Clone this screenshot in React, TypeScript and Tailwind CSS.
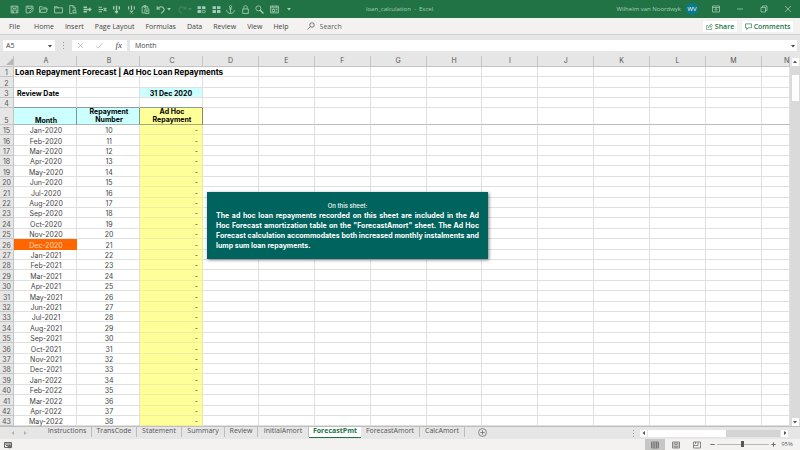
import React from "react";

const EXTRA_COLUMNS = ["D", "E", "F", "G", "H", "I", "J", "K", "L", "M", "N"];
const MONTHS = ["Jan", "Feb", "Mar", "Apr", "May", "Jun", "Jul", "Aug", "Sep", "Oct", "Nov", "Dec"];
const MENU = ["Home", "Insert", "Page Layout", "Formulas", "Data", "Review", "View", "Help"];
const TABS = [
  { name: "Instructions", width: "w-[49px]" },
  { name: "TransCode", width: "w-[45px]" },
  { name: "Statement", width: "w-[45px]" },
  { name: "Summary", width: "w-[43px]" },
  { name: "Review", width: "w-[33px]" },
  { name: "InitialAmort", width: "w-[51px]" },
  { name: "ForecastPmt", width: "w-[52px]", active: true },
  { name: "ForecastAmort", width: "w-[59px]" },
  { name: "CalcAmort", width: "w-[45px]" },
];

const ROWS = Array.from({ length: 29 }, (_, i) => ({
  row: 15 + i,
  month: `${MONTHS[i % 12]}-${2020 + Math.floor(i / 12)}`,
  number: 10 + i,
}));

function Icon({ children, className = "size-[9px]" }: { children: React.ReactNode; className?: string }) {
  return (
    <svg viewBox="0 0 16 16" className={className} fill="none" stroke="currentColor" strokeWidth="1.5" aria-hidden="true">
      {children}
    </svg>
  );
}

function Tool({ label, children }: { label: string; children: React.ReactNode }) {
  return (
    <button aria-label={label} className="flex size-[9px] items-center justify-center">
      <Icon>{children}</Icon>
    </button>
  );
}

function Caret({ className = "" }: { className?: string }) {
  return (
    <svg viewBox="0 0 8 8" className={`size-1 ${className}`} fill="currentColor" aria-hidden="true">
      <path d="M0 2h8L4 7z" />
    </svg>
  );
}

function TitleBar() {
  return (
    <header className="flex h-[18px] shrink-0 items-center bg-[#217346] pl-[10px] text-[6px] text-[#a6cdb6]">
      <div className="flex w-[155px] items-center justify-between">
        <Tool label="Save"><path d="M2 2h12v12H2zM5 2v4h6V2M4 14V9h8v5M6 11v3" /></Tool>
        <Tool label="Save as"><path d="M7 14H2V2h12v5M5 2v4h6V2M8 14l1-3 5-5 2 2-5 5z" /></Tool>
        <Tool label="Open"><path d="M1 13V3h5l2 2h5v2M1 13l3-6h11l-2 6z" /></Tool>
        <Tool label="Close folder"><path d="M1 14V3h5l1 2h8v9zM1 5h7" /></Tool>
        <Tool label="Print preview"><path d="M7 15H3V1h6l4 4v3M9 1v4h4M9 15V9h5v5H9zM12 13l3 2" /></Tool>
        <Tool label="Insert rows"><path d="M1 4h6M1 12h6M1 8h14M12 5v6" strokeWidth="2.4" /></Tool>
        <Tool label="Delete rows"><path d="M1 4h6M1 12h6M1 8h8M10 5l5 6M15 5l-5 6" strokeWidth="2" /></Tool>
        <Tool label="Insert columns"><path d="M3 2v6M13 2v6M8 1v14M5 12h6" strokeWidth="2.4" /></Tool>
        <Tool label="Delete columns"><path d="M3 2v6M13 2v6M8 1v8M5 10l6 5M11 10l-6 5" strokeWidth="2" /></Tool>
        <Tool label="Paste"><path d="M6 14H2V3h10v3M5 3V1h4v3H5M7 7h7v8H7zM9 10h3M9 12h3" /></Tool>
        <Tool label="Undo"><path d="M2 2v5h5M2 7c3-4 8-5 11-2s1 6-2 8l-2 2" strokeWidth="1.8" /></Tool>
      </div>
      <Caret className="ml-[2px]" />
      <div className="ml-[7px] flex items-center text-[#438863]">
        <Tool label="Redo"><path d="M14 2v5H9M14 7c-3-4-8-5-11-2s-1 6 2 8l2 2" strokeWidth="1.8" /></Tool>
        <Caret className="ml-[1px]" />
      </div>
      <div className="ml-[5px] flex w-[96px] items-center justify-between">
        <Tool label="Freeze panes">
          <path d="M1 2h6v5H1zM9 2h6v5H9zM1 9h6v5H1z" fill="currentColor" stroke="none" />
          <path d="M9 9.500h5.500v4H9z" strokeWidth="1.2" />
        </Tool>
        <Tool label="Unfreeze panes"><path d="M1 2h6v5H1zM9 2h6v5H9zM1 9h6v5H1zM9 9h6v5H9z" fill="currentColor" stroke="none" /></Tool>
        <Tool label="Anchor"><circle cx="8" cy="3" r="2" /><path d="M8 5v10M5 7h6M1 9c1 4 3 6 7 6s6-2 7-6" /></Tool>
        <Tool label="Protect"><path d="M3 7h10v8H3zM5 7V4c0-4 6-4 6 0v3" /></Tool>
        <Tool label="Find"><circle cx="6" cy="6" r="4.500" /><path d="M9 9l6 6" strokeWidth="2.400" /></Tool>
        <Tool label="Form"><path d="M1 2h14v12H1zM1 5h14M4 8h4v4H4zM10 8h3M10 11h3M5 1v3M11 1v3" /></Tool>
        <button aria-label="Customize toolbar" className="flex w-[9px] justify-center"><Caret /></button>
      </div>
      <h1 className="flex-1 pl-[73px] whitespace-pre">loan_calculation  -  Excel</h1>
      <span>Wilhelm van Noordwyk</span>
      <span className="ml-[5px] flex size-3 items-center justify-center rounded-full bg-[#0b7a8c] text-[6px] text-white">WV</span>
      <div className="flex items-center gap-[16px] pr-[8px] pl-[14px]">
        <button aria-label="Ribbon display options"><Icon className="size-2"><path d="M1 2h14v12H1zM1 5h14M8 13V7M5 10l3-3 3 3" /></Icon></button>
        <button aria-label="Minimize"><Icon className="size-2"><path d="M2 8h12" /></Icon></button>
        <button aria-label="Restore"><Icon className="size-2"><path d="M2 5h9v9H2zM5 5V2h9v9h-3" /></Icon></button>
        <button aria-label="Close"><Icon className="size-2"><path d="M2 2l12 12M14 2L2 14" /></Icon></button>
      </div>
    </header>
  );
}

function MenuBar() {
  return (
    <nav className="flex h-4 shrink-0 items-center bg-[#f3f2f1] pr-[7px] pl-[9px] text-[7px] text-[#444444]">
      <button className="mr-[14px]">File</button>
      <div className="flex gap-[11px]">
        {MENU.map((item) => <button key={item}>{item}</button>)}
      </div>
      <label className="ml-[18px] flex flex-1 items-center gap-[5px]">
        <Icon className="size-2 text-[#555555]"><circle cx="10" cy="6" r="4.500" /><path d="M7 9l-6 6" /></Icon>
        <input aria-label="Search" placeholder="Search" className="w-12 bg-transparent outline-none placeholder:text-[#5c5c5c]" />
      </label>
      <div className="flex gap-[5px] font-semibold text-[#217346]">
        <button className="flex h-[11px] w-[34px] items-center justify-center gap-[2px] rounded-[1px] bg-white">
          <Icon className="size-[7px]"><path d="M5 6H1v9h12v-4M5 11c0-4 3-6 6-6V2l4 4-4 4V8c-3 0-5 1-6 3z" strokeWidth="1.2" /></Icon>Share
        </button>
        <button className="flex h-[11px] w-[51px] items-center justify-center gap-[2px] rounded-[1px] bg-white">
          <Icon className="size-[7px]"><path d="M1 2h14v9H7l-3 4v-4H1z" /></Icon>Comments
        </button>
      </div>
    </nav>
  );
}

function FormulaBar() {
  return (
    <div className="flex h-[22px] shrink-0 items-center border-t border-[#d2d2d2] bg-[#e6e6e6] pr-[3px] pl-[3px] text-[7px] text-[#444444]">
      <label className="flex h-[11px] w-[52px] items-center bg-white pr-[3px] pl-[3px]">
        <input aria-label="Name box" defaultValue="A5" className="min-w-0 flex-1 bg-transparent outline-none" />
        <Caret />
      </label>
      <div className="flex w-[17px] flex-col items-center gap-[2px]">
        <i className="size-px bg-[#999999]" /><i className="size-px bg-[#999999]" /><i className="size-px bg-[#999999]" />
      </div>
      <div className="flex h-[11px] w-[55px] items-center justify-between bg-white px-[5px]">
        <button aria-label="Cancel" className="text-[#a8a8a8]"><Icon className="size-[7px]"><path d="M2 2l12 12M14 2L2 14" /></Icon></button>
        <button aria-label="Enter" className="text-[#a8a8a8]"><Icon className="size-[7px]"><path d="M1 9l4 5L15 2" /></Icon></button>
        <button aria-label="Insert function" className="font-['Liberation_Serif',serif] text-[9px] leading-[9px] italic">fx</button>
      </div>
      <label className="ml-[3px] flex h-[11px] flex-1 items-center bg-white pr-[2px] pl-[5px]">
        <input aria-label="Formula" defaultValue="Month" className="min-w-0 flex-1 bg-transparent outline-none" />
        <Caret />
      </label>
    </div>
  );
}

const HEAD = "border-b border-r border-[#c4c4c4] bg-[#e6e6e6] p-0 text-center leading-[10px] font-normal text-[#555555]";
const CELL = "border-b border-r border-[#e0e0e0] p-0";

function RowHead({ n, className = "pt-[2px]" }: { n: number; className?: string }) {
  return (
    <th scope="row" className={`border-r border-b border-[#c4c4c4] bg-[#e6e6e6] px-0 pb-0 text-center font-normal text-[#555555] ${className}`}>
      {n}
    </th>
  );
}

function EmptyCells({ from = 0, className = CELL }: { from?: number; className?: string }) {
  return <>{EXTRA_COLUMNS.slice(from).map((c) => <td key={c} className={className} />)}</>;
}

function Sheet() {
  return (
    <div className="relative min-w-0 flex-1 overflow-hidden bg-white font-['Inter',sans-serif] text-[7px] leading-[7px] text-[#444444]">
      <table className="w-full table-fixed border-separate border-spacing-0">
        <colgroup>
          <col className="w-[14px]" /><col className="w-[63px]" /><col className="w-[63px]" /><col className="w-[63px]" />
          {EXTRA_COLUMNS.map((c) => <col key={c} className={c === "N" ? "w-[28px]" : ""} />)}
        </colgroup>
        <thead>
          <tr className="h-[11px]">
            <th className={HEAD}>
              <svg viewBox="0 0 8 8" className="ml-auto size-[7px] fill-[#b8b8b8]" aria-hidden="true"><path d="M8 0v8H0z" /></svg>
            </th>
            {["A", "B", "C"].map((c) => <th key={c} scope="col" className={`${HEAD} pl-[2px]`}>{c}</th>)}
            {EXTRA_COLUMNS.map((c) => (
              <th key={c} scope="col" className={c === "N" ? `${HEAD} pl-[22px]` : HEAD}>{c}</th>
            ))}
          </tr>
        </thead>
        <tbody>
          <tr className="h-[10px]">
            <RowHead n={1} />
            <td colSpan={4} className="border-r border-b border-[#e0e0e0] pt-[2px] pr-0 pb-0 pl-px text-[8px] font-bold whitespace-nowrap text-black">
              Loan Repayment Forecast | Ad Hoc Loan Repayments
            </td>
            <EmptyCells from={1} />
          </tr>
          <tr className="h-[11px]">
            <RowHead n={2} />
            <td className={CELL} /><td className={CELL} /><td className={CELL} />
            <EmptyCells />
          </tr>
          <tr className="h-[10px] font-bold text-black">
            <RowHead n={3} />
            <td className="border-r border-b border-[#e0e0e0] pt-[2px] pr-0 pb-0 pl-[3px]">Review Date</td>
            <td className={CELL} />
            <td className="border-r border-b border-[#e0e0e0] bg-[#ccffff] px-0 pt-[2px] pb-0 text-center">31 Dec 2020</td>
            <EmptyCells />
          </tr>
          <tr className="h-[10px]">
            <RowHead n={4} />
            <td className="border-r border-b border-r-[#e0e0e0] border-b-[#8c9c9c] p-0" />
            <td className="border-r border-b border-r-[#e0e0e0] border-b-[#8c9c9c] p-0" />
            <td className="border-r border-b border-r-[#e0e0e0] border-b-[#8c9c9c] p-0" />
            <EmptyCells />
          </tr>
          <tr className="h-[17px] text-center align-bottom leading-[8px] font-bold text-black">
            <RowHead n={5} className="align-bottom leading-[7px]" />
            <td className="border-r border-b border-r-[#7d9a9a] border-b-[#a8b8b8] bg-[#ccffff] p-0 pl-[2px] leading-[7px]">Month</td>
            <td className="border-r border-b border-r-[#7d9a9a] border-b-[#a8b8b8] bg-[#ccffff] p-0 pl-[2px]">Repayment<br />Number</td>
            <td className="border-r border-b border-r-[#8a8a60] border-b-[#a8a878] bg-[#ffff99] p-0 pl-[2px]">Ad Hoc<br />Repayment</td>
            <EmptyCells className="border-r border-b border-r-[#e0e0e0] border-b-[#bcbcbc] p-0" />
          </tr>
        </tbody>
        <tbody className="text-center">
          {ROWS.map(({ row, month, number }) => (
            <tr key={row} className="h-[10px] nth-[5n+2]:h-[11px] nth-[5n+5]:h-[11px]">
              <RowHead n={row} />
              <td
                className={
                  row === 26
                    ? "border-r border-b border-[#ff6600] bg-[#ff6600] pt-[2px] pr-0 pb-0 pl-[2px] text-[#ffd9bf]"
                    : "border-r border-b border-[#e0e0e0] pt-[2px] pr-0 pb-0 pl-[2px]"
                }
              >
                {month}
              </td>
              <td className="border-r border-b border-[#e0e0e0] pt-[2px] pr-0 pb-0 pl-[2px]">{number}</td>
              <td className="border-r border-b border-r-[#e6e6b0] border-b-[#f0f09c] bg-[#ffff99] pt-[2px] pr-1 pb-0 pl-0 text-right">-</td>
              <EmptyCells />
            </tr>
          ))}
        </tbody>
      </table>
      <aside className="absolute top-[136px] left-[207px] w-[281px] bg-[#00635d] px-[9px] pt-[9px] pb-[8px] text-[7px] leading-[10px] text-white shadow-[1px_1px_3px_#00000080]">
        <p className="text-center text-[6px] font-medium">On this sheet:</p>
        <p className="text-justify font-bold">
          The ad hoc loan repayments recorded on this sheet are included in the Ad Hoc Forecast amortization table on the
          "ForecastAmort" sheet. The Ad Hoc Forecast calculation accommodates both increased monthly instalments and lump
          sum loan repayments.
        </p>
      </aside>
    </div>
  );
}

function VerticalScroll() {
  return (
    <div className="flex w-[10px] shrink-0 flex-col items-center bg-[#dadada] text-[#555555]">
      <div className="flex h-[10px] w-full items-end justify-center bg-[#e6e6e6]">
        <button aria-label="Scroll up" className="flex h-[8px] w-[7px] items-center justify-center bg-white">
          <Caret className="rotate-180" />
        </button>
      </div>
      <div className="mt-[9px] h-[26px] w-[7px] bg-white" />
      <button aria-label="Scroll down" className="mt-auto flex h-[8px] w-[7px] items-center justify-center bg-white"><Caret /></button>
    </div>
  );
}

function SheetTabs() {
  return (
    <div className="flex h-[13px] shrink-0 items-start border-t border-[#bdbdbd] bg-[#e6e6e6] text-[7px] text-[#555555]">
      <div className="flex h-[11px] w-[43px] items-center gap-[8px] pl-[11px] text-[#b0b0b0]">
        <button aria-label="Previous sheet"><Caret className="rotate-90" /></button>
        <button aria-label="Next sheet"><Caret className="-rotate-90" /></button>
      </div>
      {TABS.map((tab) =>
        tab.active ? (
          <button key={tab.name} className={`${tab.width} flex h-[11px] shrink-0 items-start justify-center border-b border-[#217346] bg-white leading-[8px] font-bold text-[#217346]`}>
            {tab.name}
          </button>
        ) : (
          <button key={tab.name} className={`${tab.width} flex h-[10px] shrink-0 items-start justify-center border-r border-[#bdbdbd] leading-[8px]`}>
            {tab.name}
          </button>
        ),
      )}
      <button aria-label="New sheet" className="mt-px ml-[13px] text-[#777777]">
        <Icon className="size-[9px]"><circle cx="8" cy="8" r="7" /><path d="M8 4v8M4 8h8" /></Icon>
      </button>
      <div className="ml-auto flex h-[12px] items-center pr-[12px]">
        <div className="mr-[6px] flex flex-col gap-[2px]">
          <i className="size-px bg-[#999999]" /><i className="size-px bg-[#999999]" /><i className="size-px bg-[#999999]" />
        </div>
        <button aria-label="Scroll left" className="flex h-[7px] w-[7px] items-center justify-center bg-white"><Caret className="rotate-90" /></button>
        <div className="mx-px h-[7px] w-[132px] bg-[#d4d4d4]"><div className="h-full w-[78px] bg-white" /></div>
        <button aria-label="Scroll right" className="flex h-[7px] w-[7px] items-center justify-center bg-white"><Caret className="-rotate-90" /></button>
      </div>
    </div>
  );
}

function StatusBar() {
  return (
    <footer className="flex h-[11px] shrink-0 items-center bg-[#f3f2f1] pr-[7px] pl-1 text-[6px] text-[#666666]">
      <button aria-label="Record macro">
        <Icon className="size-2"><path d="M1 3h14v10H1zM1 6h14M4 9h4" strokeWidth="2" /><circle cx="11" cy="11" r="3" fill="currentColor" /></Icon>
      </button>
      <div className="ml-auto flex h-full items-center">
        <button aria-label="Normal view" className="flex h-full w-5 items-center justify-center bg-[#c6c6c6]">
          <Icon className="size-2"><path d="M1 2h14v12H1zM1 6h14M1 10h14M6 2v12M11 2v12" /></Icon>
        </button>
        <button aria-label="Page layout view" className="flex w-[22px] justify-center">
          <Icon className="size-2"><path d="M1 2h14v12H1zM4 4h8v8H4zM6 7h4M6 10h4" /></Icon>
        </button>
        <button aria-label="Page break view" className="flex w-5 justify-center">
          <Icon className="size-2"><path d="M1 2h14v12H1zM1 9h9V2M5 2v4" /></Icon>
        </button>
        <button aria-label="Zoom out" className="ml-[3px]"><Icon className="size-[5px]"><path d="M1 8h14" strokeWidth="3" /></Icon></button>
        <input
          type="range"
          aria-label="Zoom"
          min={0}
          max={100}
          defaultValue={48}
          className="mx-[2px] h-[7px] w-[52px] appearance-none bg-transparent [&::-webkit-slider-runnable-track]:h-px [&::-webkit-slider-runnable-track]:bg-[#b8b8b8] [&::-webkit-slider-thumb]:-mt-[3px] [&::-webkit-slider-thumb]:h-[6px] [&::-webkit-slider-thumb]:w-[3px] [&::-webkit-slider-thumb]:appearance-none [&::-webkit-slider-thumb]:bg-[#555555]"
        />
        <button aria-label="Zoom in"><Icon className="size-[5px]"><path d="M1 8h14M8 1v14" strokeWidth="3" /></Icon></button>
        <span className="ml-[5px]">95%</span>
      </div>
    </footer>
  );
}

export default function App() {
  return (
    <div className="flex h-screen flex-col overflow-hidden bg-[#e6e6e6] font-['Open_Sans',sans-serif] leading-[9px]">
      <TitleBar />
      <MenuBar />
      <FormulaBar />
      <main className="flex min-h-0 flex-1">
        <Sheet />
        <VerticalScroll />
      </main>
      <SheetTabs />
      <StatusBar />
    </div>
  );
}
